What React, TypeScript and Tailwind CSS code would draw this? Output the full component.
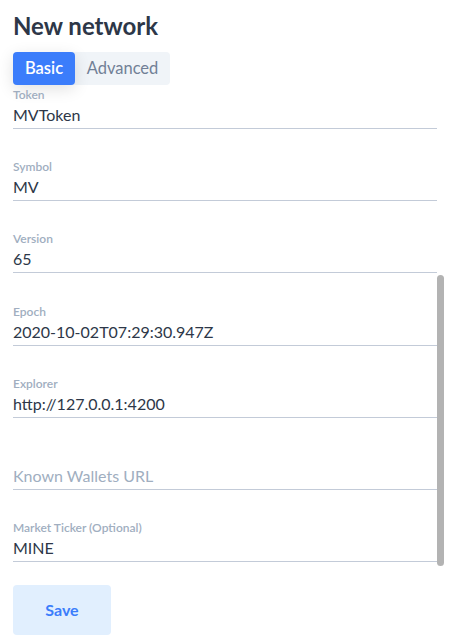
import React from "react";

const fields: { label?: string; value?: string; placeholder?: string }[] = [
  { label: "Token", value: "MVToken" },
  { label: "Symbol", value: "MV" },
  { label: "Version", value: "65" },
  { label: "Epoch", value: "2020-10-02T07:29:30.947Z" },
  { label: "Explorer", value: "http://127.0.0.1:4200" },
  { placeholder: "Known Wallets URL" },
  { label: "Market Ticker (Optional)", value: "MINE" },
];

export default function App() {
  return (
    <div
      className="relative w-[453px] h-[643px] overflow-hidden bg-white"
      style={{ fontFamily: "Lato, 'Open Sans', sans-serif" }}
    >
      <div className="pl-[13px] pr-[16px]">
        <h1 className="pt-[11px] text-[24px] leading-[30px] font-bold text-[#2d3748]">New network</h1>
        <div className="mt-[11px] flex w-[157px] h-[33px] rounded-[4px] bg-[#f0f4f8]">
          <div className="w-[62px] h-full rounded-[4px] bg-[#3b7dfb] text-white text-[16.5px] font-semibold flex items-center justify-center shadow-[0_4px_16px_rgba(0,0,0,0.12)]">
            Basic
          </div>
          <div className="flex-1 h-full flex items-center justify-center text-[16.5px] text-[#718096]">
            Advanced
          </div>
        </div>
        <div className="flex flex-col">
          {fields.map((f, i) => (
            <div key={i} className={i === 0 ? "pt-[3px]" : "pt-[31.2px]"}>
              <div className="h-[14px] text-[12px] leading-[14px] font-semibold text-[#a0aec0]">
                {f.label ?? ""}
              </div>
              <div
                className={
                  "h-[27px] pt-[1px] text-[16px] leading-[24px] border-b border-[#c3cbd8] " +
                  (f.value ? "text-[#2d3748]" : "text-[#a0aec0]")
                }
              >
                {f.value ?? f.placeholder}
              </div>
            </div>
          ))}
        </div>
        <button className="mt-[23px] w-[98px] h-[50px] rounded-[4px] bg-[#e1effe] text-[#3b7dfb] text-[16px] font-bold">
          Save
        </button>
      </div>
      <div className="absolute left-[437px] top-[275px] w-[7px] h-[291px] rounded-[4px] bg-[#b3b3b3]" />
    </div>
  );
}
